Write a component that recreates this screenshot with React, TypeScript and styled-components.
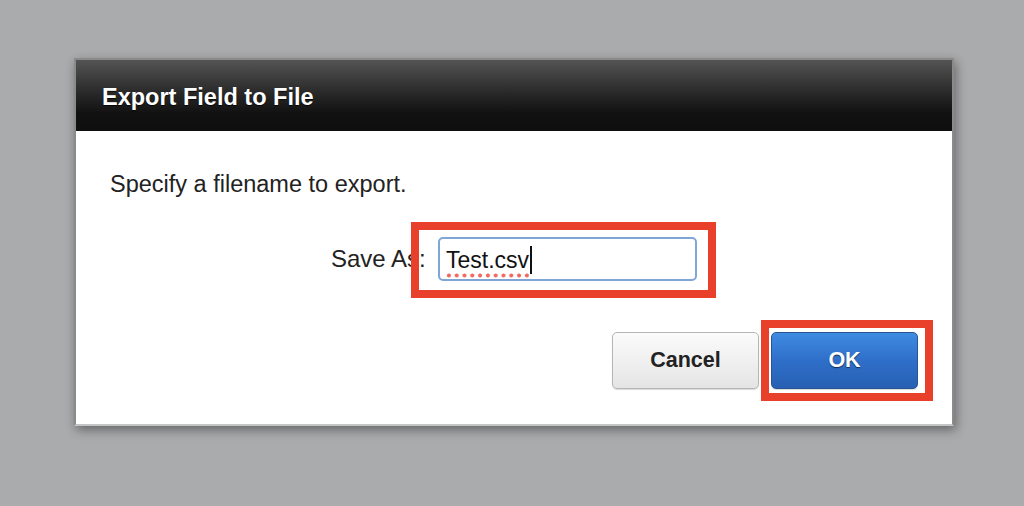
import styled, { createGlobalStyle } from "styled-components";

const Global = createGlobalStyle`
  html, body {
    margin: 0;
    padding: 0;
    background: #aaabac;
    font-family: "Liberation Sans", Arial, sans-serif;
  }
`;

const App = () => {
  return (
    <>
      <Global />
      <Page>
        <Dialog>
          <Header>
            <Title>Export Field to File</Title>
          </Header>
          <Body>
            <Message>Specify a filename to export.</Message>
            <Row>
              <Label>Save As:</Label>
              <Marked top={15} left={27} right={19} bottom={17}>
                <Field>
                  <Value>Test.csv</Value>
                  <Caret />
                </Field>
              </Marked>
            </Row>
            <Actions>
              <Button>Cancel</Button>
              <Marked top={12} left={10} right={15} bottom={12}>
                <Button primary>OK</Button>
              </Marked>
            </Actions>
          </Body>
        </Dialog>
      </Page>
    </>
  );
};

export default App;

const Page = styled.div`
  width: 1024px;
  height: 506px;
  box-sizing: border-box;
  padding: 58px 0 0 74px;
`;

const Dialog = styled.div`
  width: 880px;
  height: 368px;
  box-sizing: border-box;
  background: #fff;
  border: 2px solid #8a8a8a;
  border-bottom-color: #c4c4c4;
  box-shadow: 2px 4px 10px rgba(0, 0, 0, 0.4);
  display: flex;
  flex-direction: column;
`;

const Header = styled.div`
  height: 71px;
  background: linear-gradient(to bottom, #545454 0%, #2a2a2a 45%, #111 75%, #0f0f0f 100%);
  display: flex;
  align-items: center;
  padding-left: 26px;
`;

const Title = styled.div`
  color: #fff;
  font-size: 23.5px;
  font-weight: bold;
  text-shadow: 0 1px 1px rgba(0, 0, 0, 0.8);
  margin-top: 3px;
`;

const Body = styled.div`
  flex: 1;
  display: flex;
  flex-direction: column;
  padding: 40px 34px 0 34px;
`;

const Message = styled.div`
  font-size: 23.5px;
  color: #222;
  line-height: 26px;
`;

const Row = styled.div`
  display: flex;
  align-items: center;
  margin-top: 40px;
  padding-left: 221px;
`;

const Label = styled.div`
  font-size: 24px;
  color: #222;
  width: 107px;
  white-space: nowrap;
`;

const Marked = styled.div<{ top: number; left: number; right: number; bottom: number }>`
  position: relative;
  &::after {
    content: "";
    position: absolute;
    top: ${(p) => -p.top}px;
    left: ${(p) => -p.left}px;
    right: ${(p) => -p.right}px;
    bottom: ${(p) => -p.bottom}px;
    border: 8px solid #e8402a;
    pointer-events: none;
  }
`;

const Field = styled.div`
  width: 259px;
  height: 44px;
  box-sizing: border-box;
  border: 2px solid #7fa6d6;
  border-radius: 5px;
  display: flex;
  align-items: center;
  padding-left: 6px;
  background: #fff;
`;

const Value = styled.span`
  font-size: 23px;
  color: #111;
  line-height: 28px;
  padding-bottom: 4px;
  margin-top: 6px;
  background-image: radial-gradient(circle, #ef6a5e 0, #ef6a5e 1.6px, transparent 2.4px);
  background-size: 7.8px 5px;
  background-repeat: repeat-x;
  background-position: -1px 100%;
`;

const Caret = styled.span`
  width: 1.5px;
  height: 28px;
  background: #111;
  margin-left: 1px;
  margin-top: 2px;
`;

const Actions = styled.div`
  display: flex;
  justify-content: flex-end;
  gap: 12px;
  margin-top: 51px;
`;

const Button = styled.div<{ primary?: boolean }>`
  width: 147px;
  height: 57px;
  box-sizing: border-box;
  border-radius: 5px;
  display: flex;
  align-items: center;
  justify-content: center;
  font-size: 21.5px;
  font-weight: bold;
  border: 1px solid ${(p) => (p.primary ? "#2a5594" : "#b5b5b5")};
  color: ${(p) => (p.primary ? "#fff" : "#222")};
  background: ${(p) =>
    p.primary
      ? "linear-gradient(to bottom, #3f8be2 0%, #2f6fc9 50%, #2760b3 100%)"
      : "linear-gradient(to bottom, #fbfbfb 0%, #eeeeee 60%, #e4e4e4 100%)"};
  text-shadow: ${(p) => (p.primary ? "0 1px 1px rgba(0,0,0,0.6)" : "none")};
  box-shadow: 0 1px 1px rgba(0, 0, 0, 0.15);
`;
